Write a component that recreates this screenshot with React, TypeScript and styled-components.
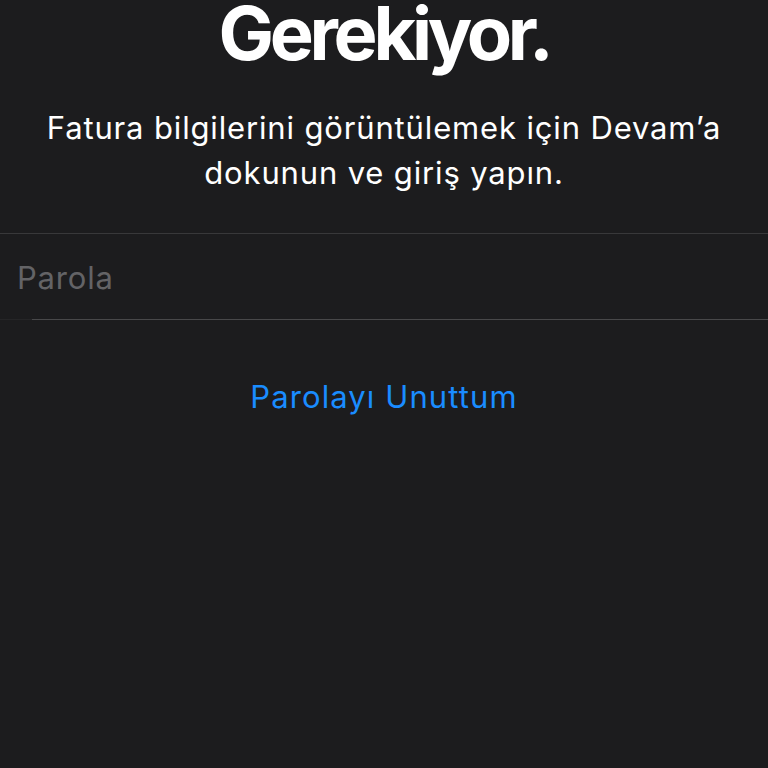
import React from 'react';
import styled, { createGlobalStyle } from 'styled-components';

const GlobalStyle = createGlobalStyle`
  html, body {
    margin: 0;
    padding: 0;
    background: #1c1c1e;
  }
  body {
    font-family: Inter, 'Liberation Sans', Arial, sans-serif;
    -webkit-font-smoothing: antialiased;
  }
`;

const Screen = styled.div`
  width: 768px;
  height: 768px;
  overflow: hidden;
  background: #1c1c1e;
  display: flex;
  flex-direction: column;
`;

const Header = styled.div`
  display: flex;
  flex-direction: column;
  align-items: center;
  padding: 0 10px;
`;

const Title = styled.h1`
  margin: 0;
  font-size: 74px;
  line-height: 66px;
  font-weight: 700;
  letter-spacing: -4.3px;
  color: #ffffff;
`;

const Subtitle = styled.p`
  margin: 39px 0 0;
  font-size: 31px;
  line-height: 45px;
  color: #ffffff;
  text-align: center;
  letter-spacing: 0.85px;
  white-space: nowrap;
`;

const Field = styled.div`
  margin-top: 38px;
  height: 85px;
  border-top: 1px solid #38383a;
  border-bottom: 1px solid #252527;
  position: relative;
  display: flex;
  align-items: center;
  padding-left: 17px;
`;

const Separator = styled.div<{ inset: number }>`
  position: absolute;
  left: ${(p) => p.inset}px;
  right: 0;
  bottom: -1px;
  height: 1px;
  background: #48484a;
`;

const Placeholder = styled.span`
  font-size: 31px;
  color: #636366;
  letter-spacing: 0.8px;
  margin-top: 2px;
`;

const Link = styled.a`
  align-self: center;
  margin-top: 58px;
  font-size: 31px;
  color: #1a8cff;
  text-decoration: none;
  letter-spacing: 1.1px;
`;

export default function App() {
  return (
    <Screen>
      <GlobalStyle />
      <Header>
        <Title>Gerekiyor.</Title>
        <Subtitle>
          Fatura bilgilerini görüntülemek için Devam’a
          <br />
          dokunun ve giriş yapın.
        </Subtitle>
      </Header>
      <Field>
        <Placeholder>Parola</Placeholder>
        <Separator inset={32} />
      </Field>
      <Link>Parolayı Unuttum</Link>
    </Screen>
  );
}
